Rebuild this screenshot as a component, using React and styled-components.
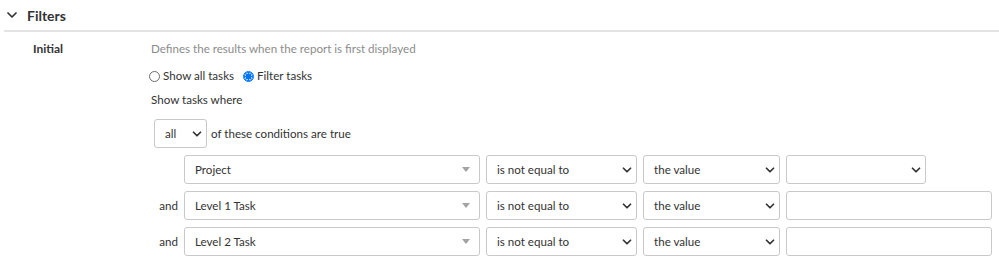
import styled, { createGlobalStyle } from "styled-components";
import { ChevronDown } from "lucide-react";

const GlobalStyle = createGlobalStyle`
  body {
    margin: 0;
    background: #fff;
    font-family: Lato, "Noto Sans", sans-serif;
    color: #333;
  }
`;

const SectionHeader = styled.div`
  display: flex;
  align-items: center;
  gap: 7px;
  height: 30px;
  margin-left: 4px;
  border-bottom: 2px solid #e3e3e3;
  h2 {
    margin: 0;
    font-size: 14px;
    font-weight: 700;
    color: #333;
  }
`;

const FieldRow = styled.div`
  display: grid;
  grid-template-columns: 118px 1fr;
  padding: 9px 0 0 33px;
`;

const FieldLabel = styled.div`
  font-size: 12px;
  font-weight: 700;
  line-height: 16px;
`;

const Content = styled.div`
  display: flex;
  flex-direction: column;
  font-size: 11.6px;
  line-height: 16px;
`;

const Hint = styled.div`
  color: #8c8c8c;
`;

const RadioGroup = styled.div`
  display: flex;
  align-items: center;
  gap: 9px;
  height: 18px;
  margin: 10px 0 0 -2px;
`;

const RadioLabel = styled.label`
  display: flex;
  align-items: center;
  gap: 3px;
`;

const RadioDot = styled.span`
  box-sizing: border-box;
  width: 11px;
  height: 11px;
  border-radius: 50%;
  border: 1px solid ${(p) => (p.$checked ? "#0075ff" : "#6b6b6b")};
  background: ${(p) =>
    p.$checked ? "radial-gradient(circle, #0075ff 0 3px, #fff 3.2px)" : "#fff"};
  box-shadow: ${(p) => (p.$checked ? "inset 0 0 0 1px #0075ff" : "none")};
`;

const Caption = styled.div`
  margin-top: 7px;
`;

const Conditions = styled.div`
  display: flex;
  flex-direction: column;
  gap: 7px;
  margin: 11px 0 0 3px;
`;

const MatchLine = styled.div`
  display: flex;
  align-items: center;
  gap: 4px;
`;

const CondRow = styled.div`
  display: grid;
  grid-template-columns: 24px 296px 151px 137px auto;
  column-gap: 6px;
  align-items: center;
`;

const Joiner = styled.span`
  text-align: right;
`;

const Box = styled.div`
  box-sizing: border-box;
  display: flex;
  align-items: center;
  justify-content: space-between;
  width: ${(p) => p.$width}px;
  height: 29px;
  padding: 0 ${(p) => (p.$caret ? 9 : 2)}px 0 10px;
  border: 1px solid #c9c9c9;
  border-radius: 3px;
  background: #fff;
  font-size: 11.6px;
  color: #333;
`;

const Caret = styled.span`
  width: 0;
  height: 0;
  border-left: 4px solid transparent;
  border-right: 4px solid transparent;
  border-top: 5px solid #a3a3a3;
`;

function Select({ width, caret, children }) {
  return (
    <Box $width={width} $caret={caret}>
      <span>{children}</span>
      {caret ? (
        <Caret />
      ) : (
        <ChevronDown size={14} strokeWidth={3} color="#333" />
      )}
    </Box>
  );
}

const rows = [
  { join: "", field: "Project", last: "select" },
  { join: "and", field: "Level 1 Task", last: "input" },
  { join: "and", field: "Level 2 Task", last: "input" },
];

export default function App() {
  return (
    <>
      <GlobalStyle />
      <SectionHeader>
        <ChevronDown size={16} strokeWidth={2.6} color="#333" />
        <h2>Filters</h2>
      </SectionHeader>
      <FieldRow>
        <FieldLabel>Initial</FieldLabel>
        <Content>
          <Hint>Defines the results when the report is first displayed</Hint>
          <RadioGroup>
            <RadioLabel>
              <RadioDot />
              Show all tasks
            </RadioLabel>
            <RadioLabel>
              <RadioDot $checked />
              Filter tasks
            </RadioLabel>
          </RadioGroup>
          <Caption>Show tasks where</Caption>
          <Conditions>
            <MatchLine>
              <Select width={53}>all</Select>
              <span>of these conditions are true</span>
            </MatchLine>
            {rows.map((r) => (
              <CondRow key={r.field}>
                <Joiner>{r.join}</Joiner>
                <Select width={296} caret>
                  {r.field}
                </Select>
                <Select width={151}>is not equal to</Select>
                <Select width={137}>the value</Select>
                {r.last === "select" ? (
                  <Select width={140} />
                ) : (
                  <Box $width={206} />
                )}
              </CondRow>
            ))}
          </Conditions>
        </Content>
      </FieldRow>
    </>
  );
}
